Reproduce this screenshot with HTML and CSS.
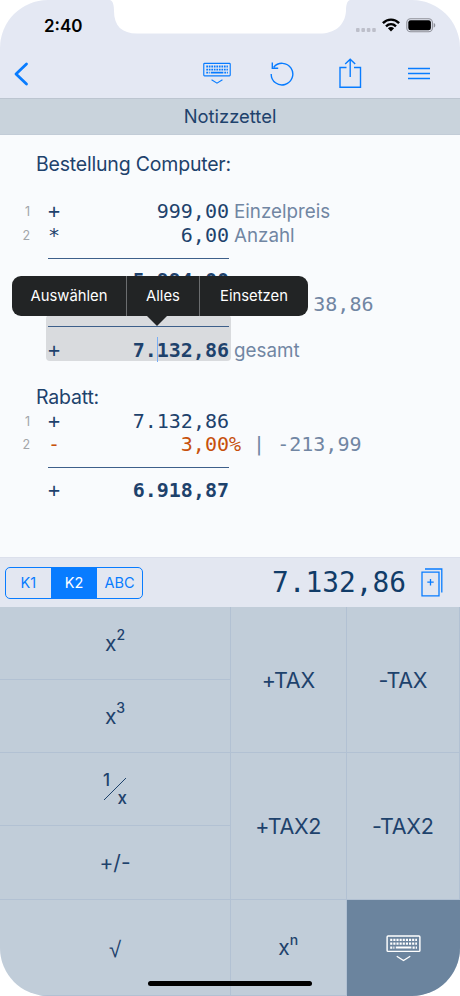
FILE: index.html
```html
<!DOCTYPE html>
<html lang="de">
<head>
  <meta charset="UTF-8" />
  <meta name="viewport" content="width=device-width, initial-scale=1.0"/>
  <title>Notizzettel</title>
  <link rel="stylesheet" href="styles.css">
</head>
<body>
  <svg class="defs" width="0" height="0">
    <symbol id="keyboard" viewBox="0 0 36 28">
      <rect x="1" y="1" width="34" height="16" rx="1" fill="none" stroke="currentColor" stroke-width="1.5"/>
      <path d="M4.2 5H32M4.2 9H32M4.2 13H8.6M27.4 13H32" fill="none" stroke="currentColor" stroke-width="2.3" stroke-dasharray="2.2 1.05"/>
      <path d="M10 13H26.2" fill="none" stroke="currentColor" stroke-width="2.2"/>
      <path d="M11 22L18 26.5L25 22" fill="none" stroke="currentColor" stroke-width="1.4"/>
    </symbol>
  </svg>

  <div class="screen">
    <svg class="notch" width="240" height="34" viewBox="0 0 240 34">
      <path d="M0 0C3 1 4 5 4 11C4 26 12 33.5 27 33.5H210C224 33.5 235 26 236 11C236 5 237 1 240 0Z" fill="#fff"/>
    </svg>

    <div class="status">
      <span class="time">2:40</span>
      <div class="signals">
        <svg width="22" height="5" viewBox="0 0 22 5" fill="#bdbfca">
          <rect x="1" width="3.6" height="4" rx="1"/><rect x="6.4" width="3.6" height="4" rx="1"/>
          <rect x="11.8" width="3.6" height="4" rx="1"/><rect x="17.2" width="3.6" height="4" rx="1"/>
        </svg>
        <svg class="wifi" width="18" height="14" viewBox="0 0 18 14" fill="none" stroke="#000" stroke-width="2.4">
          <path d="M.9 5.1C5.5 .4 12.5 .4 17.1 5.1M4 8.3C6.9 5.5 11.1 5.5 14 8.3"/>
          <path d="M5.9 10.3C7.7 8.7 10.3 8.7 12.1 10.3L9 13.5Z" fill="#000" stroke="none"/>
        </svg>
        <svg width="30" height="15" viewBox="0 0 30 15">
          <rect x=".8" y=".8" width="25.6" height="13" rx="3.8" fill="none" stroke="#8e9099" stroke-width="1.1"/>
          <rect x="2.3" y="2.3" width="22.6" height="10" rx="2.3"/>
          <path d="M27.7 5C29.8 5.7 29.8 8.9 27.7 9.6Z" fill="#8e9099"/>
        </svg>
      </div>
    </div>

    <div class="toolbar">
      <svg width="16" height="24" viewBox="0 0 16 24" fill="none" stroke="currentColor" stroke-width="2.8" stroke-linecap="round" stroke-linejoin="round"><path d="M12.5 2L2 12L12.5 22"/></svg>
      <div class="tools">
        <svg width="28" height="23"><use href="#keyboard"/></svg>
        <svg class="undo" width="24" height="24" viewBox="0 0 24 24" fill="none" stroke="currentColor" stroke-width="1.4"><path d="M1.2 12A10.8 10.8 0 1 0 3.7 5.2M2.3 .5V6.3H8.2"/></svg>
        <svg class="share" width="24" height="31" viewBox="0 0 24 31" fill="none" stroke="currentColor" stroke-width="1.4"><path d="M8.5 9.5H2V29.3H22.5V9.5H16M12.2 19V1.8M7.2 6L12.2 1.2L17.2 6"/></svg>
        <svg width="22" height="13" viewBox="0 0 22 13" fill="none" stroke="currentColor" stroke-width="1.3"><path d="M0 1.5H22M0 6.5H22M0 11.5H22"/></svg>
      </div>
    </div>

    <div class="title">Notizzettel</div>

    <div class="notes">
      <div class="heading">Bestellung Computer:</div>
      <div class="row blank"></div>
      <div class="row"><span class="num">1</span><span>+</span><span class="value">999,00</span><span class="label">Einzelpreis</span></div>
      <div class="row"><span class="num">2</span><span>*</span><span class="value">6,00</span><span class="label">Anzahl</span></div>
      <div class="row"><hr></div>
      <div class="row subtotal"><span class="num"></span><span></span><span class="value total">5.994,00</span></div>
      <div class="row"><span class="num"></span><span></span><span class="value"></span><span class="rest">       38,86</span></div>
      <div class="selection">
        <div class="row"><hr></div>
        <div class="row"><span class="num"></span><span>+</span><span class="value total">7.<i class="caret"></i>132,86</span><span class="label">gesamt</span></div>
        <div class="menu">
          <span>Auswählen</span><span>Alles</span><span>Einsetzen</span>
        </div>
      </div>
      <div class="row"></div>
      <div class="heading">Rabatt:</div>
      <div class="row"><span class="num">1</span><span>+</span><span class="value">7.132,86</span></div>
      <div class="row"><span class="num">2</span><span class="minus">-</span><span class="value minus">3,00</span><span class="rest"><span class="minus">%</span> | -213,99</span></div>
      <div class="row"><hr></div>
      <div class="row"><span class="num"></span><span>+</span><span class="value total">6.918,87</span></div>
    </div>

    <div class="display">
      <div class="tabs">
        <span>K1</span><span class="active">K2</span><span>ABC</span>
      </div>
      <span class="result">7.132,86</span>
      <svg width="22" height="29" viewBox="0 0 22 29" fill="none" stroke="currentColor" stroke-width="1.3"><path d="M4 1H20.8V24.5M1 4.2H18V27.8H1ZM9.5 11V17.4M6.3 14.2H12.7"/></svg>
    </div>

    <div class="keys">
      <div class="key">x<sup>2</sup></div>
      <div class="key tall">+TAX</div>
      <div class="key tall">-TAX</div>
      <div class="key">x<sup>3</sup></div>
      <div class="key">
        <div class="fraction">
          <span>1</span>
          <svg width="24" height="24" viewBox="0 0 24 24" stroke="currentColor"><path d="M1 23L23 1"/></svg>
          <span>x</span>
        </div>
      </div>
      <div class="key tall">+TAX2</div>
      <div class="key tall">-TAX2</div>
      <div class="key">+/-</div>
      <div class="key root">√</div>
      <div class="key">x<sup>n</sup></div>
      <div class="key hide"><svg width="35" height="27"><use href="#keyboard"/></svg></div>
    </div>
    <div class="home-bar"></div>
  </div>
</body>
</html>
```

FILE: styles.css
```css
* {
  box-sizing: border-box;
}
body {
  margin: 0;
  background: #fff;
  color: #1e426c;
  font-family: Inter, sans-serif;
}
.defs {
  position: absolute;
}
.screen {
  position: relative;
  display: flex;
  flex-direction: column;
  width: 460px;
  height: 996px;
  background: #f9fbfd;
  border-radius: 48px;
  overflow: hidden;
}
.notch {
  position: absolute;
  top: 0;
  left: 110px;
}
.status {
  display: flex;
  justify-content: space-between;
  height: 49px;
  padding: 16px 24px 0 44px;
  background: #e4e8f3;
}
.time {
  color: #000;
  font-size: 17px;
  font-weight: 600;
  line-height: 20px;
}
.signals {
  display: flex;
  align-items: flex-start;
  padding-top: 2px;
}
.signals svg:first-child {
  margin: 10px 5px 0 0;
}
.wifi {
  margin-right: 6px;
}
.toolbar {
  display: flex;
  align-items: center;
  justify-content: space-between;
  height: 49px;
  padding: 0 30px 0 14px;
  background: #e4e8f3;
  color: #087cff;
}
.tools {
  display: flex;
  align-items: center;
  width: 227px;
}
.undo {
  margin-left: 39px;
}
.share {
  margin: 0 46px 0 44px;
}
.title {
  height: 37px;
  border-top: 1px solid #bcc5d0;
  border-bottom: 1px solid #c2ccd7;
  background: #c9d3dc;
  font-size: 18.4px;
  line-height: 35px;
  text-align: center;
}
.notes {
  height: 422px;
  padding-top: 17.5px;
  font-family: "DejaVu Sans Mono", monospace;
  font-size: 20px;
}
.heading {
  height: 23.25px;
  padding-left: 36px;
  font-family: Inter, sans-serif;
  font-size: 19.5px;
  letter-spacing: -0.2px;
  line-height: 23.25px;
}
.row {
  display: grid;
  grid-template-columns: 30px 12px 169px 1fr;
  height: 23.25px;
  line-height: 23.25px;
  white-space: pre;
}
.row.blank {
  height: 24.5px;
}
.row.subtotal {
  line-height: 20px;
}
.row > .num {
  color: #a2a5a9;
  font-family: Inter, sans-serif;
  font-size: 12.5px;
  text-align: right;
}
.row > .num + span {
  margin-left: 18px;
}
.row > .value {
  text-align: right;
  margin-right: -18px;
}
.total {
  font-weight: bold;
}
.label {
  margin-left: 23px;
  color: #7186a3;
  font-family: Inter, sans-serif;
  font-size: 18.8px;
}
.rest {
  margin-left: 18px;
  color: #7186a3;
}
.minus {
  color: #c7500c;
}
.row hr {
  grid-column: 1 / 5;
  align-self: center;
  width: 181px;
  height: 1px;
  margin: 0 0 0 48px;
  border: 0;
  background: #3d5f8a;
}
.selection {
  position: relative;
  z-index: 1;
  margin: -1.25px 0 1.25px;
}
.selection::before {
  content: "";
  position: absolute;
  z-index: -1;
  top: 0;
  left: 46px;
  width: 185px;
  height: 46px;
  border-radius: 4px;
  background: #d9dbde;
}
.caret {
  position: absolute;
  bottom: 0;
  width: 1px;
  height: 25px;
  background: #78aef5;
}
.menu {
  position: absolute;
  bottom: 45.5px;
  left: 12px;
  display: flex;
  width: 296px;
  height: 40px;
  border-radius: 9px;
  background: #222425;
  color: #fff;
  font-family: Inter, sans-serif;
  font-size: 14.8px;
  line-height: 40px;
  text-align: center;
}
.menu span:nth-child(1) {
  width: 114px;
}
.menu span:nth-child(2) {
  width: 74px;
  border: solid #6b6d6f;
  border-width: 0 1px;
}
.menu span:nth-child(3) {
  flex: 1;
}
.menu::after {
  content: "";
  position: absolute;
  top: 39.5px;
  left: 135px;
  border: 10px solid transparent;
  border-top-color: #222425;
  border-bottom: 0;
}
.display {
  display: flex;
  align-items: center;
  height: 50px;
  padding: 0 17px 0 5px;
  background: #e3e7f1;
  border-top: 1px solid #dce0ec;
  color: #087cff;
}
.tabs {
  display: flex;
  width: 138px;
  height: 32px;
  border: 1px solid #087cff;
  border-radius: 5px;
  overflow: hidden;
  font-size: 14.5px;
  line-height: 30px;
  text-align: center;
}
.tabs span {
  width: 45px;
}
.tabs .active {
  width: 47px;
  background: #087cff;
  color: #fff;
}
.result {
  margin: 0 15px 0 auto;
  color: #113c68;
  font-family: "DejaVu Sans Mono", monospace;
  font-size: 27.8px;
}
.keys {
  display: grid;
  grid-template-columns: 231px 115.5px 113.5px;
  grid-template-rows: 73px 73px 73px 74px 96px;
  background: #c1cdd9;
}
.key {
  display: flex;
  align-items: center;
  justify-content: center;
  border: solid #b2c1d3;
  border-width: 0 1px 1px 0;
  font-size: 21px;
}
.tall {
  grid-row: span 2;
  font-size: 21.5px;
  letter-spacing: -0.3px;
}
.key sup {
  margin: -16px 0 0 0;
  font-size: 14px;
  font-weight: 500;
  line-height: 1;
}
.root {
  padding-top: 4px;
  font-family: "Liberation Sans", sans-serif;
  font-size: 22px;
}
.fraction {
  display: grid;
  grid-template-columns: 12px 12px;
  grid-template-rows: 18px 18px;
  font-size: 17px;
  font-weight: 500;
  line-height: 18px;
}
.fraction svg {
  grid-area: 1 / 1 / 3 / 3;
  align-self: center;
}
.fraction span:first-child {
  grid-area: 1 / 1;
}
.fraction span:last-child {
  grid-area: 2 / 2;
  text-align: right;
}
.hide {
  background: #6b849e;
  border: 0;
  color: #fff;
}
.home-bar {
  position: absolute;
  bottom: 10px;
  left: 148px;
  width: 164px;
  height: 5px;
  border-radius: 3px;
  background: #000;
}
```
